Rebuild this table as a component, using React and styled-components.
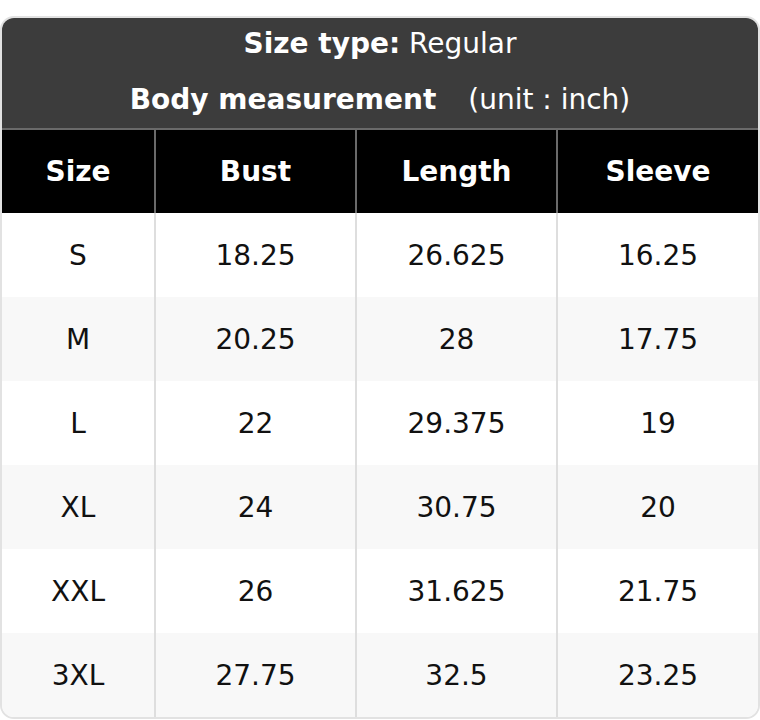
import React from "react";
import styled, { createGlobalStyle } from "styled-components";

const GlobalStyle = createGlobalStyle`
  html, body {
    margin: 0;
    padding: 0;
    background: #ffffff;
    font-family: "DejaVu Sans", Verdana, sans-serif;
  }
`;

const rows = [
  ["S", "18.25", "26.625", "16.25"],
  ["M", "20.25", "28", "17.75"],
  ["L", "22", "29.375", "19"],
  ["XL", "24", "30.75", "20"],
  ["XXL", "26", "31.625", "21.75"],
  ["3XL", "27.75", "32.5", "23.25"],
];

const Page = styled.div`
  padding-top: 16px;
`;

const Card = styled.div`
  border: 2px solid #e2e2e2;
  border-radius: 14px;
  overflow: hidden;
  background: #fff;
`;

const TitleBar = styled.div`
  background: #3c3c3c;
  color: #fff;
  text-align: center;
  font-size: 28px;
  margin: -2px -2px 0;
`;

const TitleLine = styled.div`
  height: 56px;
  line-height: 56px;
  b {
    font-weight: bold;
  }
`;

const Unit = styled.span`
  margin-left: 32px;
`;

const Table = styled.table`
  width: 100%;
  border-collapse: collapse;
  table-layout: fixed;
  font-size: 28px;
  color: #111;
`;

const Head = styled.th`
  background: #000;
  color: #fff;
  font-weight: bold;
  height: 83px;
  padding: 0;
  border: 2px solid #6a6a6a;
  border-bottom: none;
  &:first-child { border-left: none; }
  &:last-child { border-right: none; }
`;

const Row = styled.tr`
  background: ${(p) => (p.$odd ? "#f8f8f8" : "#ffffff")};
`;

const Cell = styled.td`
  text-align: center;
  height: 84px;
  padding: 0;
  border-left: 2px solid #dedede;
  &:first-child { border-left: none; }
`;

export default function App() {
  return (
    <Page>
      <GlobalStyle />
      <Card>
        <TitleBar>
          <TitleLine>
            <b>Size type:</b> Regular
          </TitleLine>
          <TitleLine>
            <b>Body measurement</b>
            <Unit>(unit : inch)</Unit>
          </TitleLine>
        </TitleBar>
        <Table>
          <colgroup>
            <col style={{ width: 153 }} />
            <col />
            <col />
            <col />
          </colgroup>
          <thead>
            <tr>
              <Head>Size</Head>
              <Head>Bust</Head>
              <Head>Length</Head>
              <Head>Sleeve</Head>
            </tr>
          </thead>
          <tbody>
            {rows.map((r, i) => (
              <Row key={r[0]} $odd={i % 2 === 1}>
                {r.map((v, j) => (
                  <Cell key={j}>{v}</Cell>
                ))}
              </Row>
            ))}
          </tbody>
        </Table>
      </Card>
    </Page>
  );
}
